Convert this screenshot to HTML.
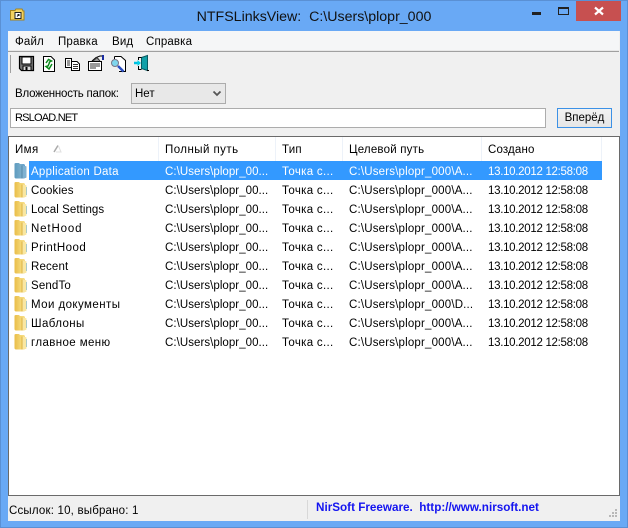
<!DOCTYPE html>
<html><head><meta charset="utf-8">
<style>
html,body{margin:0;padding:0;width:628px;height:528px;overflow:hidden;background:#69a9f5}
*{box-sizing:border-box}
body{font-family:"Liberation Sans","Noto Sans CJK SC",sans-serif;font-size:11.5px;color:#000;position:relative}
.a{position:absolute;white-space:nowrap}
.t{position:absolute;white-space:nowrap;line-height:14px}
.w{color:#fff}
.p{left:165px;letter-spacing:.05px}
.k{left:282px;letter-spacing:.3px}
.g{left:349px;letter-spacing:.18px}
.d{left:488px;letter-spacing:-.3px}
.n{left:31px}
.s{left:158px;top:137px;width:1px;height:24px;background:#edf2f9}
.f{position:absolute;left:14px}
</style></head><body>
<svg width="0" height="0" style="position:absolute"><defs>
<linearGradient id="y" x1="0" x2="1" y1="0" y2="0"><stop offset="0" stop-color="#e9bd48"/><stop offset=".55" stop-color="#f5d877"/><stop offset="1" stop-color="#f8e08e"/></linearGradient>
<linearGradient id="b" x1="0" x2="1" y1="0" y2="0"><stop offset="0" stop-color="#5e9bbf"/><stop offset=".55" stop-color="#79adcb"/><stop offset="1" stop-color="#5b9ad0"/></linearGradient>
<symbol id="fy" viewBox="0 0 13 17"><path d="M0.500 2 Q0.500 1 2 1 H5 L6 2 H10 L11 3 V4 L12.500 4.500 V15.500 L10 16.500 H1.500 L0.500 15.500 Z" fill="url(#y)"/><path d="M8 3.500 L12.500 4.500 V15.500 L8 16.500 Z" fill="#f9e7a2"/><path d="M8 3.500 V16.500" stroke="#dcb243"/><path d="M12.500 6 V14" stroke="#a9c9c8"/></symbol>
</defs></svg>
<div class="a" style="left:0;top:0;width:628px;height:528px;border:1px solid #5a90d4"></div>
<svg class="a" style="left:9px;top:7px" width="18" height="16" viewBox="0 0 18 16"><path d="M1.500 3.500 L6 3.500 L7 2 L13 2 L14 4 L15 4 L15 13 L1.500 13 Z" fill="#f3d15f" stroke="#a5841e"/><rect x="6" y="5.500" width="6" height="6" fill="#fff" stroke="#222"/><path d="M8 9.500 L10 7.500 M8.500 7.500 H10 V9" stroke="#222" fill="none"/></svg>
<div class="a" style="left:0;top:8px;width:628px;text-align:center;font-size:14.2px;line-height:18px;color:#111">NTFSLinksView:&nbsp; C:\Users\plopr_000</div>
<div class="a" style="left:532px;top:12px;width:9px;height:3px;background:#222"></div>
<div class="a" style="left:558px;top:7px;width:11px;height:8px;border:1px solid #222;border-top:2px solid #222"></div>
<div class="a" style="left:576px;top:1px;width:45px;height:20px;background:#c75050"></div>
<svg class="a" style="left:593px;top:6px" width="12" height="10"><path d="M2 1.500 L10 8.500 M10 1.500 L2 8.500" stroke="#fff" stroke-width="2.200"/></svg>

<div class="a" style="left:8px;top:31px;width:612px;height:490px;background:#f0f0f0"></div>
<div class="a" style="left:8px;top:31px;width:611px;height:20px;background:#f5f6f7;border-bottom:1px solid #e8e8e8"></div>
<div class="a" style="left:8px;top:51px;width:611px;height:1px;background:#a0a0a0"></div>
<div class="t" style="left:15px;top:35px;letter-spacing:.15px">Файл</div>
<div class="t" style="left:58px;top:35px;letter-spacing:.15px">Правка</div>
<div class="t" style="left:112px;top:35px;letter-spacing:.15px">Вид</div>
<div class="t" style="left:146px;top:35px;letter-spacing:.15px">Справка</div>

<div class="a" style="left:10px;top:55px;width:1px;height:18px;background:#a0a0a0"></div>
<svg class="a" style="left:18px;top:54px" width="140" height="20" viewBox="0 0 140 20" fill="none">
<path d="M1.500 2.500 H15.500 V16.500 H3.500 L1.500 14.500 Z" stroke="#000" fill="#777" stroke-width="1.200"/><rect x="4" y="3" width="9" height="7" fill="#fff" stroke="#000"/><rect x="5" y="12" width="8" height="4.500" fill="#ddd" stroke="#000"/><rect x="7.500" y="13" width="2" height="3" fill="#000"/>
<path d="M25.500 2.500 H33 L36.500 6 V17.500 H25.500 Z" stroke="#000" fill="#fff"/><path d="M28 9 L30.500 5.500 L33.500 7 L31.500 8 L31 10" stroke="#0a8a1a" stroke-width="1.500"/><path d="M34 10 L31 15 L28 12.500 L30 12 L31 10" stroke="#0a8a1a" stroke-width="1.500"/>
<path d="M47.500 4.500 H53.500 V13.500 H47.500 Z" stroke="#000" fill="#fff"/><path d="M53.500 7.500 H59 L61.500 10 V16.500 H53.500 Z" stroke="#000" fill="#fff"/><path d="M49 7 H52 M49 9 H52 M49 11 H52 M55 10.500 H60 M55 12.500 H60 M55 14.500 H60" stroke="#333"/>
<path d="M70.500 7.500 H83.500 V16.500 H70.500 Z" stroke="#000" fill="#fff"/><path d="M72 10 H82 M72 12 H82 M72 14 H78" stroke="#333"/><path d="M74 7 L78 3.500 L82 2 H85" stroke="#000" fill="none"/><path d="M75 7 L79 3.500 L82 7" fill="#999" stroke="#333"/><rect x="84" y="1" width="2" height="5" fill="#1a2ca0"/>
<path d="M96.500 2.500 H103 L107.500 6.500 V17.500 H101" stroke="#000" fill="#fff"/><path d="M96.500 2.500 V5" stroke="#000"/><circle cx="97" cy="9" r="3.500" fill="#7fd6ee" stroke="#778"/><path d="M100 12 L105.500 17.500" stroke="#2a4ec0" stroke-width="2.500"/>
<path d="M123.500 3.500 L129.500 1.500 V16.500 L123.500 14.500 Z" fill="#12a0a8" stroke="#0a5a60"/><path d="M123.500 3.500 H120.500 V6 M120.500 12 V15.500 H123.500" stroke="#000"/><path d="M116 9 H120" stroke="#00c0e0" stroke-width="2.500"/><path d="M119.500 6 L123 9 L119.500 12 Z" fill="#00d0e8"/><path d="M129 16.500 H131" stroke="#000"/>
</svg>

<div class="t" style="left:15px;top:87px;letter-spacing:-.22px">Вложенность папок:</div>
<div class="a" style="left:131px;top:83px;width:95px;height:21px;background:#e8e8e8;border:1px solid #acacac"></div>
<div class="t" style="left:135px;top:87px">Нет</div>
<svg class="a" style="left:212px;top:90px" width="10" height="8"><path d="M1.500 1.500 L5 5 L8.500 1.500" stroke="#555" stroke-width="1.800" fill="none"/></svg>

<div class="a" style="left:10px;top:108px;width:536px;height:20px;background:#fff;border:1px solid #acacac"></div>
<div class="t" style="left:15px;top:111px;font-size:11px;letter-spacing:-.8px">RSLOAD.NET</div>
<div class="a" style="left:557px;top:108px;width:55px;height:20px;border:1px solid #3c91e6;background:linear-gradient(#f2f2f2,#e6e6e6);text-align:center;line-height:19px">Вперёд</div>

<div class="a" style="left:8px;top:136px;width:612px;height:360px;background:#fff;border:1px solid #6a6a6a"></div>
<div class="a s" style="left:158px"></div>
<div class="a s" style="left:275px"></div>
<div class="a s" style="left:342px"></div>
<div class="a s" style="left:481px"></div>
<div class="a s" style="left:601px"></div>
<div class="t" style="left:15px;top:143px;letter-spacing:.4px">Имя</div>
<svg class="a" style="left:53px;top:144px" width="9" height="9"><path d="M1 8 L5 1.500" stroke="#aaa" stroke-width="1.500"/><path d="M5.500 2 L8 8 H3" stroke="#e0e0e0" fill="none"/></svg>
<div class="t" style="left:165px;top:143px;letter-spacing:.45px">Полный путь</div>
<div class="t" style="left:282px;top:143px;letter-spacing:.2px">Тип</div>
<div class="t" style="left:349px;top:143px;letter-spacing:.2px">Целевой путь</div>
<div class="t" style="left:488px;top:143px;letter-spacing:.15px">Создано</div>

<div class="a" style="left:29px;top:161px;width:573px;height:19px;background:#3399ff"></div>

<svg class="f" style="top:162px" width="13" height="17" viewBox="0 0 13 17"><path d="M0.500 2 Q0.500 1 2 1 H5 L6 2 H10 L11 3 V4 L12.500 4.500 V15.500 L10 16.500 H1.500 L0.500 15.500 Z" fill="url(#b)"/><path d="M8 3.500 L12.500 4.500 V15.500 L8 16.500 Z" fill="#7fb2d2"/><path d="M8 3.500 V16.500" stroke="#5488a8"/></svg>
<svg class="f" style="top:181px" width="13" height="17"><use href="#fy"/></svg>
<svg class="f" style="top:200px" width="13" height="17"><use href="#fy"/></svg>
<svg class="f" style="top:219px" width="13" height="17"><use href="#fy"/></svg>
<svg class="f" style="top:238px" width="13" height="17"><use href="#fy"/></svg>
<svg class="f" style="top:257px" width="13" height="17"><use href="#fy"/></svg>
<svg class="f" style="top:276px" width="13" height="17"><use href="#fy"/></svg>
<svg class="f" style="top:295px" width="13" height="17"><use href="#fy"/></svg>
<svg class="f" style="top:314px" width="13" height="17"><use href="#fy"/></svg>
<svg class="f" style="top:333px" width="13" height="17"><use href="#fy"/></svg>

<div class="t w n" style="top:165px;letter-spacing:.25px">Application Data</div><div class="t w p" style="top:165px">C:\Users\plopr_00...</div><div class="t w k" style="top:165px">Точка с...</div><div class="t w g" style="top:165px">C:\Users\plopr_000\A...</div><div class="t w d" style="top:165px">13.10.2012 12:58:08</div>
<div class="t n" style="top:184px;letter-spacing:.15px">Cookies</div><div class="t p" style="top:184px">C:\Users\plopr_00...</div><div class="t k" style="top:184px">Точка с...</div><div class="t g" style="top:184px">C:\Users\plopr_000\A...</div><div class="t d" style="top:184px">13.10.2012 12:58:08</div>
<div class="t n" style="top:203px;letter-spacing:.07px">Local Settings</div><div class="t p" style="top:203px">C:\Users\plopr_00...</div><div class="t k" style="top:203px">Точка с...</div><div class="t g" style="top:203px">C:\Users\plopr_000\A...</div><div class="t d" style="top:203px">13.10.2012 12:58:08</div>
<div class="t n" style="top:222px;letter-spacing:.85px">NetHood</div><div class="t p" style="top:222px">C:\Users\plopr_00...</div><div class="t k" style="top:222px">Точка с...</div><div class="t g" style="top:222px">C:\Users\plopr_000\A...</div><div class="t d" style="top:222px">13.10.2012 12:58:08</div>
<div class="t n" style="top:241px;letter-spacing:.45px">PrintHood</div><div class="t p" style="top:241px">C:\Users\plopr_00...</div><div class="t k" style="top:241px">Точка с...</div><div class="t g" style="top:241px">C:\Users\plopr_000\A...</div><div class="t d" style="top:241px">13.10.2012 12:58:08</div>
<div class="t n" style="top:260px;letter-spacing:.15px">Recent</div><div class="t p" style="top:260px">C:\Users\plopr_00...</div><div class="t k" style="top:260px">Точка с...</div><div class="t g" style="top:260px">C:\Users\plopr_000\A...</div><div class="t d" style="top:260px">13.10.2012 12:58:08</div>
<div class="t n" style="top:279px;letter-spacing:.15px">SendTo</div><div class="t p" style="top:279px">C:\Users\plopr_00...</div><div class="t k" style="top:279px">Точка с...</div><div class="t g" style="top:279px">C:\Users\plopr_000\A...</div><div class="t d" style="top:279px">13.10.2012 12:58:08</div>
<div class="t n" style="top:298px;letter-spacing:.43px">Мои документы</div><div class="t p" style="top:298px">C:\Users\plopr_00...</div><div class="t k" style="top:298px">Точка с...</div><div class="t g" style="top:298px">C:\Users\plopr_000\D...</div><div class="t d" style="top:298px">13.10.2012 12:58:08</div>
<div class="t n" style="top:317px;letter-spacing:.4px">Шаблоны</div><div class="t p" style="top:317px">C:\Users\plopr_00...</div><div class="t k" style="top:317px">Точка с...</div><div class="t g" style="top:317px">C:\Users\plopr_000\A...</div><div class="t d" style="top:317px">13.10.2012 12:58:08</div>
<div class="t n" style="top:336px;letter-spacing:.4px">главное меню</div><div class="t p" style="top:336px">C:\Users\plopr_00...</div><div class="t k" style="top:336px">Точка с...</div><div class="t g" style="top:336px">C:\Users\plopr_000\A...</div><div class="t d" style="top:336px">13.10.2012 12:58:08</div>

<div class="a" style="left:307px;top:500px;width:1px;height:19px;background:#d8d8d8"></div>
<div class="t" style="left:9px;top:504px;letter-spacing:.19px">Ссылок: 10, выбрано: 1</div>
<div class="t" style="left:316px;top:501px;color:#1414f0;font-weight:bold;font-size:11.7px">NirSoft Freeware.&nbsp; http://www.nirsoft.net</div>
<svg class="a" style="left:608px;top:508px" width="10" height="10"><path d="M7 1h2v2h-2zM4 4h2v2h-2zM7 4h2v2h-2zM1 7h2v2h-2zM4 7h2v2h-2zM7 7h2v2h-2z" fill="#b8b8b8"/></svg>
</body></html>
